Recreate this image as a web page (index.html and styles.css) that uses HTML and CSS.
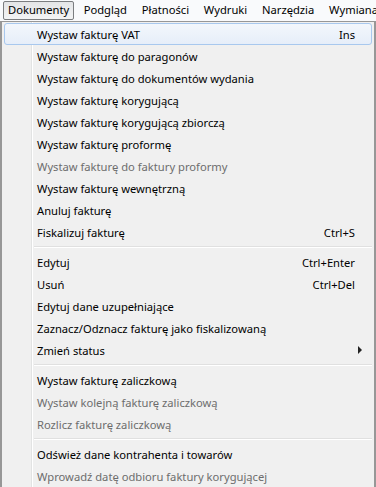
FILE: index.html
```html
<!DOCTYPE html>
<html lang="pl">
<head>
    <meta charset="UTF-8">
    <title>Dokumenty</title>
    <link rel="stylesheet" href="styles.css">
</head>
<body>
    <div class="menubar">
        <span class="barItem open">Dokumenty</span>
        <span class="barItem">Podgląd</span>
        <span class="barItem">Płatności</span>
        <span class="barItem">Wydruki</span>
        <span class="barItem">Narzędzia</span>
        <span class="barItem">Wymiana</span>
    </div>
    <div class="menu">
        <div class="item hot"><span>Wystaw fakturę VAT</span><span class="key">Ins</span></div>
        <div class="item"><span>Wystaw fakturę do paragonów</span></div>
        <div class="item"><span>Wystaw fakturę do dokumentów wydania</span></div>
        <div class="item"><span>Wystaw fakturę korygującą</span></div>
        <div class="item"><span>Wystaw fakturę korygującą zbiorczą</span></div>
        <div class="item"><span>Wystaw fakturę proformę</span></div>
        <div class="item disabled"><span>Wystaw fakturę do faktury proformy</span></div>
        <div class="item"><span>Wystaw fakturę wewnętrzną</span></div>
        <div class="item"><span>Anuluj fakturę</span></div>
        <div class="item"><span>Fiskalizuj fakturę</span><span class="key">Ctrl+S</span></div>
        <div class="sep"></div>
        <div class="item"><span>Edytuj</span><span class="key">Ctrl+Enter</span></div>
        <div class="item"><span>Usuń</span><span class="key">Ctrl+Del</span></div>
        <div class="item"><span>Edytuj dane uzupełniające</span></div>
        <div class="item"><span>Zaznacz/Odznacz fakturę jako fiskalizowaną</span></div>
        <div class="item"><span>Zmień status</span><span class="arrow"></span></div>
        <div class="sep"></div>
        <div class="item"><span>Wystaw fakturę zaliczkową</span></div>
        <div class="item disabled"><span>Wystaw kolejną fakturę zaliczkową</span></div>
        <div class="item disabled"><span>Rozlicz fakturę zaliczkową</span></div>
        <div class="sep"></div>
        <div class="item"><span>Odśwież dane kontrahenta i towarów</span></div>
        <div class="item disabled"><span>Wprowadź datę odbioru faktury korygującej</span></div>
    </div>
</body>
</html>
```

FILE: styles.css
```css
body {
    margin: 0;
    background-color: #f0f0f0;
    font-family: "Noto Sans", "Liberation Sans", sans-serif;
    font-size: 11.2px;
    color: #000;
    overflow: hidden;
}
.menubar {
    height: 21px;
    background-color: #f9fafc;
    display: flex;
    align-items: center;
    padding-left: 3px;
    white-space: nowrap;
    overflow: hidden;
}
.barItem {
    padding: 0px 6.4px;
    height: 17px;
    line-height: 16px;
    border: 1px solid transparent;
}
.open {
    padding: 0px 4px;
    border-color: #7b7d80;
    border-radius: 2px;
    background: linear-gradient(#e4e5e7, #f3f4f5);
    margin-right: 2px;
}
.menu {
    height: 600px;
    border: 1px solid #979797;
    border-left-width: 2px;
    border-right-width: 2px;
    background-color: #f0f0f0;
    background-image: linear-gradient(90deg, transparent 29px, #e2e3e3 29px, #e2e3e3 30px, #ffffff 30px, #ffffff 31px, transparent 31px);
    padding: 1px 2px;
}
.item {
    height: 22px;
    display: flex;
    align-items: center;
    justify-content: space-between;
    padding: 0px 16px 0px 32px;
    border: 1px solid transparent;
    box-sizing: border-box;
    white-space: nowrap;
}
.hot {
    border-color: #a8c8ee;
    border-radius: 3px;
    background: linear-gradient(#f3f7fc, #e6eef9);
}
.disabled {
    color: #6d6d6d;
}
.sep {
    height: 8px;
    margin-left: 30px;
    background: linear-gradient(transparent 3px, #e0e0e0 3px, #e0e0e0 4px, #ffffff 4px, #ffffff 5px, transparent 5px);
}
.arrow {
    width: 0px;
    height: 0px;
    margin-right: -7px;
    border-top: 4px solid transparent;
    border-bottom: 4px solid transparent;
    border-left: 4px solid #222;
}
```
